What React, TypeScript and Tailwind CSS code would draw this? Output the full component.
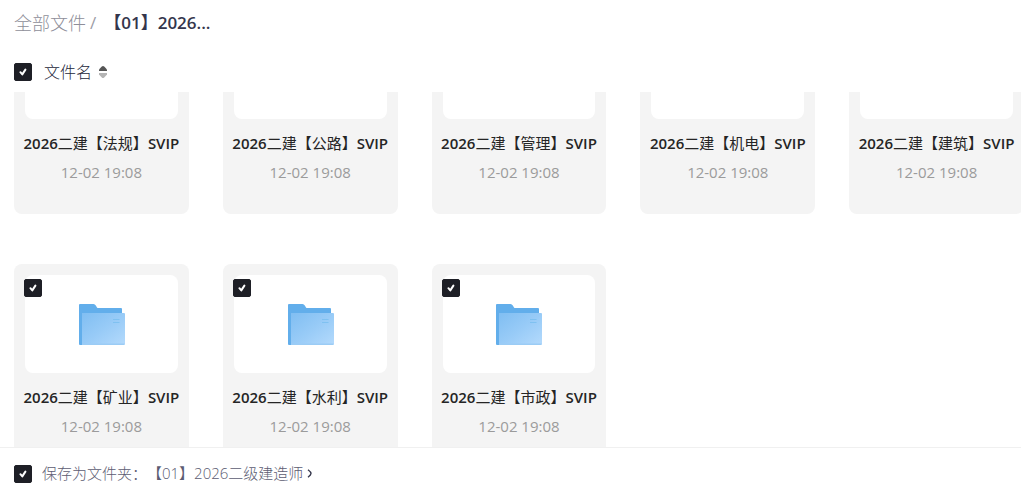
import { useLayoutEffect, useRef, useState } from 'react';

interface FileItem {
  id: string;
  subject: string;
  time: string;
}

const SUBJECTS = ['法规', '公路', '管理', '机电', '建筑', '矿业', '水利', '市政'];

const FILES: FileItem[] = SUBJECTS.map((subject) => ({
  id: subject,
  subject,
  time: '12-02 19:08',
}));

const INITIAL_SCROLL = 82;

interface CheckBoxProps {
  id: string;
  label?: string;
  checked: boolean;
  onChange: (checked: boolean) => void;
}

function CheckBox({ id, label, checked, onChange }: CheckBoxProps) {
  return (
    <span className="relative block size-[18px] shrink-0">
      <input
        id={id}
        type="checkbox"
        aria-label={label}
        checked={checked}
        onChange={(e) => onChange(e.target.checked)}
        className="peer block size-[18px] cursor-pointer appearance-none rounded-xs border border-gray-300 bg-white checked:border-[#1e1f26] checked:bg-[#1e1f26]"
      />
      <svg
        viewBox="0 0 18 18"
        fill="none"
        className="pointer-events-none absolute inset-0 hidden size-[18px] peer-checked:block"
      >
        <path
          d="M6.4 9.2 8.3 11.4 11.4 6.6"
          stroke="#fff"
          strokeWidth="2"
          strokeLinecap="round"
          strokeLinejoin="round"
        />
      </svg>
    </span>
  );
}

function FolderIcon() {
  return (
    <svg width="47" height="44" viewBox="-1 -2 47 44" aria-hidden="true">
      <defs>
        <linearGradient id="folder-front" x1="0" y1="0" x2="1" y2="1">
          <stop offset="0" stopColor="#80bef2" />
          <stop offset="0.5" stopColor="#98cbf7" />
          <stop offset="1" stopColor="#b4dafc" />
        </linearGradient>
      </defs>
      <path
        d="M1 0H14.5Q16 0 16.8 1.5L18 3.4Q18.4 4 19.2 4H42Q43 4 43 5V20H3V41H1Q0 41 0 40V1Q0 0 1 0Z"
        fill="#62aeeb"
      />
      <path d="M3 9H45Q46 9 46 10V40Q46 41 45 41H3Z" fill="url(#folder-front)" />
      <path d="M3 39.5H45.5V40Q45.5 41 44.5 41H3Z" fill="#9bccf5" />
      <path d="M34 15.5H40.5M34 18.5H40.5" stroke="#7fc1f1" strokeWidth="1" />
    </svg>
  );
}

function SortIcon() {
  return (
    <svg width="8" height="14" viewBox="0 0 8 14" aria-hidden="true">
      <path d="M0 6V4.6L2.8 1.4Q4 .4 5.2 1.4L8 4.6V6Z" fill="#555" />
      <path d="M0 8V9.4L2.8 12.6Q4 13.6 5.2 12.6L8 9.4V8Z" fill="#b5b5b5" />
    </svg>
  );
}

interface FileCardProps {
  file: FileItem;
  checked: boolean;
  onChange: (checked: boolean) => void;
}

function FileCard({ file, checked, onChange }: FileCardProps) {
  return (
    <li className="h-[204px] rounded-lg bg-[#f4f4f4] px-[11px] pt-[11px] text-center">
      <div className="relative flex h-[98px] items-center justify-center rounded-lg bg-white">
        <div className="absolute top-1 -left-px">
          <CheckBox id={`file-${file.id}`} checked={checked} onChange={onChange} />
        </div>
        <FolderIcon />
      </div>
      <label
        htmlFor={`file-${file.id}`}
        className="-mx-2 mt-3 block text-[15px] leading-6 whitespace-nowrap text-[#252525]"
      >
        <span className="font-semibold">2026</span>
        二建【{file.subject}】
        <span className="font-semibold">SVIP</span>
      </label>
      <p className="mt-[5px] text-[15px] leading-6 text-[#9b9b9b]">{file.time}</p>
    </li>
  );
}

export default function App() {
  const listRef = useRef<HTMLDivElement>(null);
  const [selected, setSelected] = useState<string[]>(FILES.map((file) => file.id));
  const [keepFolder, setKeepFolder] = useState(true);

  useLayoutEffect(() => {
    if (listRef.current) listRef.current.scrollTop = INITIAL_SCROLL;
  }, []);

  const toggle = (id: string, checked: boolean) => {
    setSelected((prev) => (checked ? [...prev, id] : prev.filter((item) => item !== id)));
  };

  return (
    <div className="flex h-screen flex-col overflow-hidden bg-white font-['Open_Sans','Noto_Sans_CJK_SC',sans-serif] [text-spacing-trim:space-all]">
      {/* Breadcrumb */}
      <nav className="flex h-[46px] shrink-0 items-center px-[14px] text-[17px]">
        <a href="#all" className="text-lg font-light text-[#8e8e99]">
          全部文件
        </a>
        <span className="mr-2 ml-1 text-[#9c9ca6]">/</span>
        <span className="font-semibold text-[#34364c]">【01】2026...</span>
      </nav>

      {/* Column header */}
      <div className="flex h-[46px] shrink-0 items-center px-[14px] pt-[6px]">
        <CheckBox
          id="select-all"
          label="全选"
          checked={selected.length === FILES.length}
          onChange={(checked) => setSelected(checked ? FILES.map((file) => file.id) : [])}
        />
        <button
          type="button"
          className="ml-3 flex items-center gap-[7px] text-base font-light text-[#25273a]"
        >
          文件名
          <SortIcon />
        </button>
      </div>

      {/* File grid */}
      <div
        ref={listRef}
        className="-mr-[3px] min-h-0 flex-1 overflow-x-hidden overflow-y-auto pb-6 pl-[14px] [scrollbar-width:none]"
      >
        <ul className="grid grid-cols-[repeat(auto-fill,minmax(174px,1fr))] gap-x-[34px] gap-y-[50px]">
          {FILES.map((file) => (
            <FileCard
              key={file.id}
              file={file}
              checked={selected.includes(file.id)}
              onChange={(checked) => toggle(file.id, checked)}
            />
          ))}
        </ul>
      </div>

      {/* Save target */}
      <footer className="flex h-[42px] shrink-0 items-center border-t border-[#f0f0f0] px-[14px] pt-[10px] text-[15px] font-light text-[#5c5c72]">
        <CheckBox id="keep-folder" checked={keepFolder} onChange={setKeepFolder} />
        <label htmlFor="keep-folder" className="ml-[10px]">
          保存为文件夹：【01】2026二级建造师
        </label>
        <svg width="5" height="9" viewBox="0 0 5 9" fill="none" className="ml-1" aria-hidden="true">
          <path d="M1 .8Q4 3 4 4.5Q4 6 1 8.2" stroke="#34364c" strokeWidth="1.4" />
        </svg>
      </footer>
    </div>
  );
}
